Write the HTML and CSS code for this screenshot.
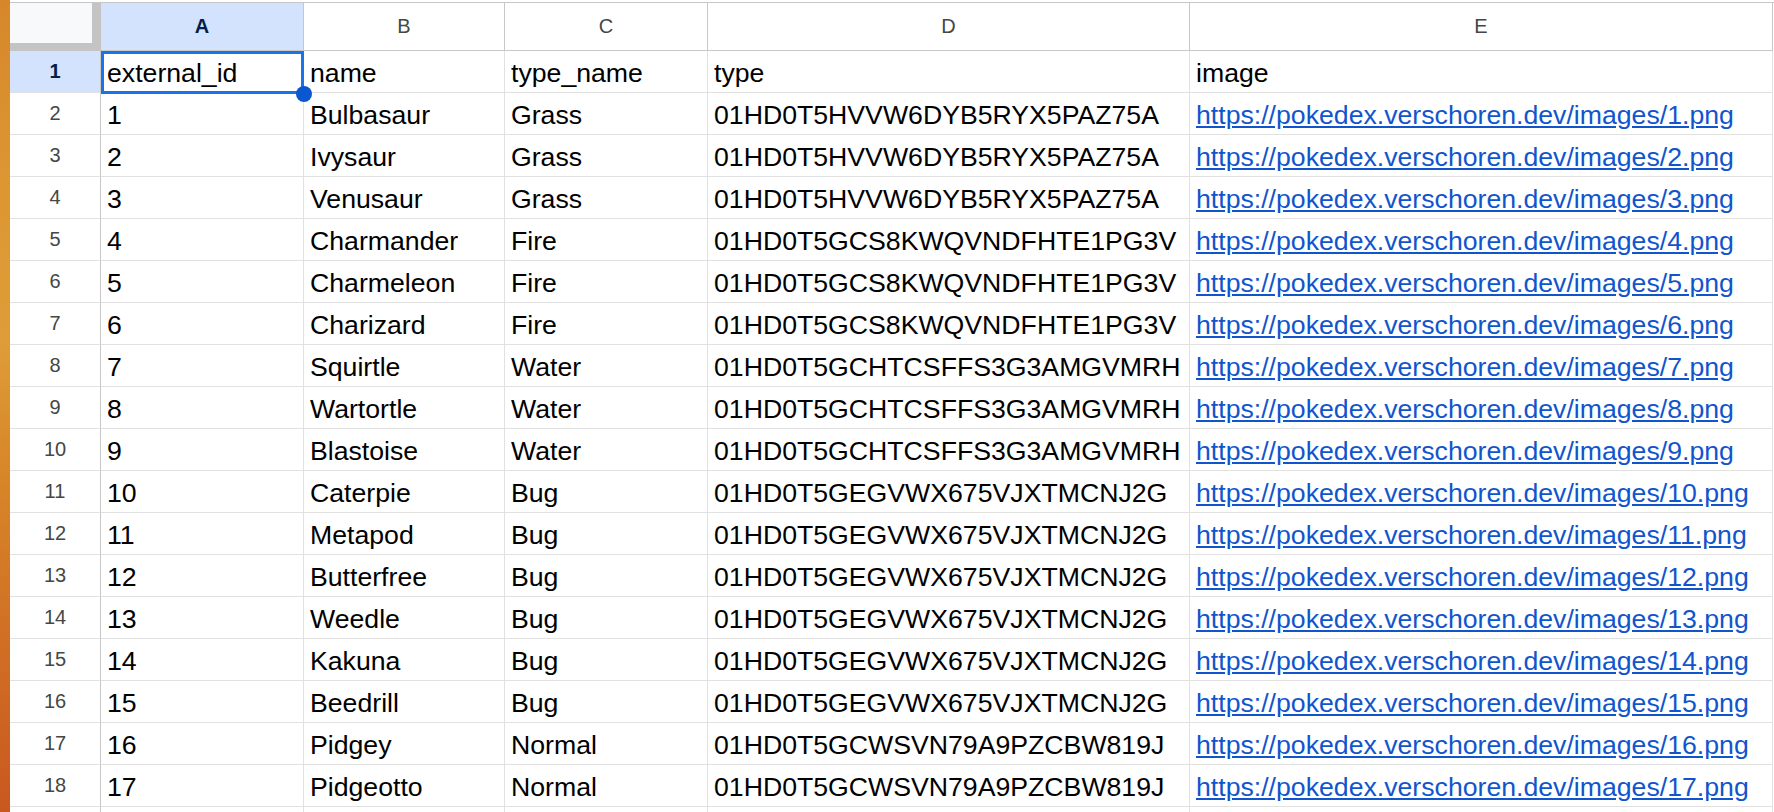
FILE: index.html
```html
<!DOCTYPE html>
<html lang="en">
<head>
    <meta charset="UTF-8">
    <meta name="viewport" content="width=device-width, initial-scale=1.0">
    <title>pokemon - sheet</title>
    <link rel="stylesheet" href="styles.css">
</head>
<body>
    <div class="wallpaper"></div>
    <div id="sheet" class="sheet">
        <!-- column headers -->
        <div class="corner"></div>
        <div class="col-head active">A</div>
        <div class="col-head">B</div>
        <div class="col-head">C</div>
        <div class="col-head">D</div>
        <div class="col-head">E</div>
        <!-- row 1 -->
        <div class="row-head active">1</div>
        <div class="cell selected">external_id<div class="selection"><span class="fill-handle"></span></div></div>
        <div class="cell">name</div>
        <div class="cell">type_name</div>
        <div class="cell">type</div>
        <div class="cell">image</div>
    </div>
    <script>
        // rows 2..18
        const types = {
            Grass: "01HD0T5HVVW6DYB5RYX5PAZ75A",
            Fire: "01HD0T5GCS8KWQVNDFHTE1PG3V",
            Water: "01HD0T5GCHTCSFFS3G3AMGVMRH",
            Bug: "01HD0T5GEGVWX675VJXTMCNJ2G",
            Normal: "01HD0T5GCWSVN79A9PZCBW819J"
        };
        const pokemon = [
            ["Bulbasaur", "Grass"], ["Ivysaur", "Grass"], ["Venusaur", "Grass"],
            ["Charmander", "Fire"], ["Charmeleon", "Fire"], ["Charizard", "Fire"],
            ["Squirtle", "Water"], ["Wartortle", "Water"], ["Blastoise", "Water"],
            ["Caterpie", "Bug"], ["Metapod", "Bug"], ["Butterfree", "Bug"],
            ["Weedle", "Bug"], ["Kakuna", "Bug"], ["Beedrill", "Bug"],
            ["Pidgey", "Normal"], ["Pidgeotto", "Normal"]
        ];

        const $sheet = document.querySelector("#sheet");

        function addCell(cls, content) {
            const $div = document.createElement("div");
            $div.className = cls;
            if (content instanceof Node) {
                $div.appendChild(content);
            } else {
                $div.textContent = content;
            }
            $sheet.appendChild($div);
        }

        pokemon.forEach(([name, typeName], index) => {
            const id = index + 1;
            const url = `https://pokedex.verschoren.dev/images/${id}.png`;
            const $link = document.createElement("a");
            $link.href = url;
            $link.textContent = url;

            addCell("row-head", id + 1);
            addCell("cell", id);
            addCell("cell", name);
            addCell("cell", typeName);
            addCell("cell", types[typeName]);
            addCell("cell", $link);
        });

        // next row only peeks in at the bottom edge
        ["row-head", "cell", "cell", "cell", "cell", "cell"].forEach((cls) => addCell(cls, ""));
    </script>
</body>
</html>
```

FILE: styles.css
```css
/*global*/
* {
    margin: 0;
    padding: 0;
    box-sizing: border-box;
}

html,
body {
    height: 100%;
    overflow: hidden;
    background-color: #fff;
}

body {
    display: flex;
    font-family: "Liberation Sans", Arial, sans-serif;
}

/*desktop peeking through on the left*/
.wallpaper {
    flex: none;
    width: 10px;
    background: linear-gradient(180deg, #d6872b 0%, #dc9632 22%, #de9d38 42%, #d98a2b 55%, #d27325 75%, #c9581f 100%);
}

/*sheet*/
.sheet {
    flex: 1;
    margin-top: 2px;
    border-top: 1px solid #c7c7c7;
    display: grid;
    grid-template-columns: 91px 203px 201px 203px 482px 583px;
    grid-template-rows: 48px;
    grid-auto-rows: 42px;
    align-content: start;
}

/*headers*/
.corner {
    background-color: #f8f9fa;
    border-right: 9px solid #c4c4c4;
    border-bottom: 8px solid #c4c4c4;
}

.col-head,
.row-head {
    display: flex;
    align-items: center;
    justify-content: center;
    font-size: 20px;
    color: #444746;
    background-color: #fff;
}

.col-head {
    border-right: 1px solid #c7c7c7;
    border-bottom: 1px solid #c7c7c7;
}

.row-head {
    border-right: 1px solid #c7c7c7;
    border-bottom: 1px solid #e1e1e1;
}

.col-head.active,
.row-head.active {
    background-color: #d3e3fd;
    color: #041e49;
    font-weight: bold;
}

/*cells*/
.cell {
    display: flex;
    align-items: flex-end;
    padding: 0 6px 4px;
    border-right: 1px solid #e1e1e1;
    border-bottom: 1px solid #e1e1e1;
    font-size: 26.67px;
    line-height: 30px;
    color: #000;
    white-space: nowrap;
    overflow: hidden;
}

.cell a {
    color: #1155cc;
    text-decoration: underline;
}

.cell.selected {
    position: relative;
    overflow: visible;
}

.selection {
    position: absolute;
    top: 0;
    left: 0;
    right: -1px;
    bottom: -2px;
    border: 3px solid #1a73e8;
    z-index: 2;
}

.fill-handle {
    position: absolute;
    right: -11px;
    bottom: -11px;
    width: 16px;
    height: 16px;
    border-radius: 50%;
    background-color: #0b57d0;
}
```
